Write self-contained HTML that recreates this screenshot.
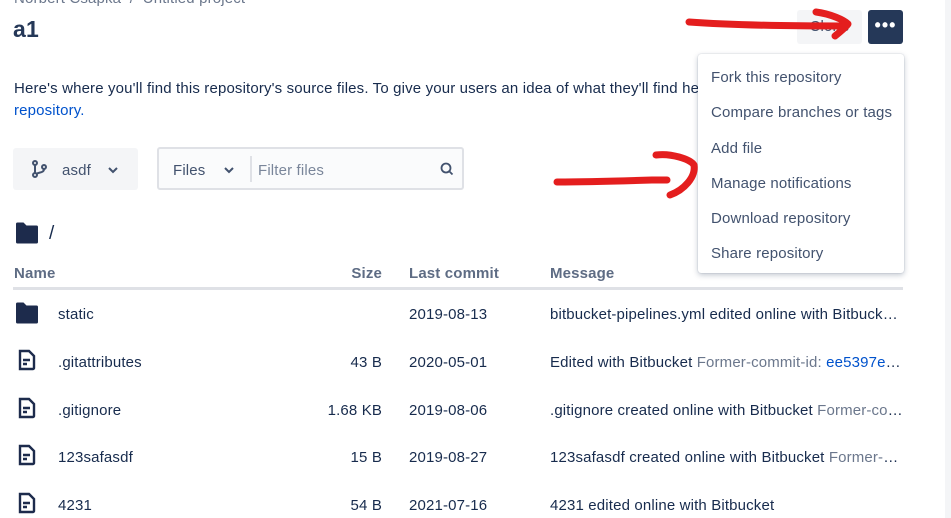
<!DOCTYPE html>
<html><head><meta charset="utf-8"><style>
*{margin:0;padding:0;box-sizing:border-box}
body{width:951px;height:518px;overflow:hidden;background:#fff;font-family:"Liberation Sans",sans-serif;font-size:15px;letter-spacing:0.15px;color:#172b4d;position:relative}
.a{position:absolute;white-space:nowrap}
.g{color:#6b778c}
.hd{font-weight:bold;color:#5e6c84}
.m{width:354px;overflow:hidden;text-overflow:ellipsis}
.s{left:282px;width:100px;text-align:right}
.mi{position:absolute;left:13px;color:#42526e}
</style></head><body>
<div style="position:absolute;right:0;top:0;width:6px;height:518px;background:#f4f5f7"></div>
<div class="a g" style="left:14px;top:-10px">Norbert Csapka &nbsp;/&nbsp; Untitled project</div>
<div class="a" style="left:13px;top:16px;font-size:23px;font-weight:bold;color:#253858">a1</div>
<div class="a" style="left:797px;top:10px;width:65px;height:34px;background:#f4f5f7;border-radius:3px;color:#42526e;text-align:center;line-height:34px">Clone</div>
<div class="a" style="left:868px;top:10px;width:35px;height:34px;background:#253858;border-radius:3px;color:#fff;text-align:center;line-height:30px;font-size:18px;font-weight:bold;letter-spacing:1px">•••</div>
<div class="a" style="left:14px;top:80px">Here's where you'll find this repository's source files. To give your users an idea of what they'll find he</div>
<div class="a" style="left:14px;top:102px;color:#0052cc">repository.</div>
<div class="a" style="left:13px;top:148px;width:125px;height:42px;background:#f4f5f7;border-radius:3px"></div>
<svg class="a" style="left:30px;top:159px" width="20" height="20" viewBox="0 0 20 20" fill="none" stroke="#42526e" stroke-width="2"><circle cx="5" cy="4" r="2"/><circle cx="5" cy="16" r="2"/><circle cx="14" cy="8" r="2"/><path d="M5 6v8M14 10c0 4-5 3-8 5"/></svg>
<div class="a" style="left:62px;top:162px;font-weight:500;color:#42526e">asdf</div>
<svg class="a" style="left:107px;top:165px" width="12" height="10"><path d="M2 3l4 4 4-4" stroke="#42526e" stroke-width="2" fill="none"/></svg>
<div class="a" style="left:157px;top:147px;width:307px;height:43px;background:#fafbfc;border:2px solid #dfe1e6;border-radius:3px"></div>
<div class="a" style="left:173px;top:162px;font-weight:500;color:#42526e">Files</div>
<svg class="a" style="left:223px;top:165px" width="12" height="10"><path d="M2 3l4 4 4-4" stroke="#42526e" stroke-width="2" fill="none"/></svg>
<div class="a" style="left:250px;top:156px;width:2px;height:26px;background:#dfe1e6"></div>
<div class="a" style="left:258px;top:162px;color:#7a869a">Filter files</div>
<svg class="a" style="left:440px;top:162px" width="14" height="14" fill="none" stroke="#42526e" stroke-width="1.8"><circle cx="6" cy="6" r="4.5"/><path d="M9.5 9.5l3 3"/></svg>
<svg class="a" style="left:15px;top:222px" width="24" height="22"><path d="M1 2a1.5 1.5 0 0 1 1.5-1.5h6l3 3h10a1.5 1.5 0 0 1 1.5 1.5v15a1.5 1.5 0 0 1-1.5 1.5h-19A1.5 1.5 0 0 1 1 20z" fill="#1d2b4c"/></svg>
<div class="a" style="left:49px;top:223px;font-size:19px">/</div>
<div class="a hd" style="left:14px;top:265px">Name</div>
<div class="a hd s" style="top:265px">Size</div>
<div class="a hd" style="left:409px;top:265px">Last commit</div>
<div class="a hd" style="left:550px;top:265px">Message</div>
<div class="a" style="left:13px;top:287px;width:890px;height:3px;background:#dfe1e6"></div>
<svg class="a" style="left:15px;top:302px" width="24" height="22"><path d="M1 2a1.5 1.5 0 0 1 1.5-1.5h6l3 3h10a1.5 1.5 0 0 1 1.5 1.5v15a1.5 1.5 0 0 1-1.5 1.5h-19A1.5 1.5 0 0 1 1 20z" fill="#1d2b4c"/></svg>
<div class="a" style="left:58px;top:306px">static</div>
<div class="a" style="left:409px;top:306px">2019-08-13</div>
<div class="a m" style="left:550px;top:306px">bitbucket-pipelines.yml edited online with Bitbucket Former</div>

<svg class="a" style="left:18px;top:349px" width="18" height="22" fill="none" stroke="#1d2b4c" stroke-width="2.4"><path d="M2 2h9l5 5v12a1 1 0 0 1-1 1H2z"/><path d="M5 11h7M5 15h4"/></svg>
<div class="a" style="left:58px;top:354px">.gitattributes</div>
<div class="a s" style="top:354px">43 B</div>
<div class="a" style="left:409px;top:354px">2020-05-01</div>
<div class="a m" style="left:550px;top:354px">Edited with Bitbucket <span class="g">Former-commit-id:</span> <span style="color:#0052cc">ee5397e8b7c6</span></div>

<svg class="a" style="left:18px;top:397px" width="18" height="22" fill="none" stroke="#1d2b4c" stroke-width="2.4"><path d="M2 2h9l5 5v12a1 1 0 0 1-1 1H2z"/><path d="M5 11h7M5 15h4"/></svg>
<div class="a" style="left:58px;top:402px">.gitignore</div>
<div class="a s" style="top:402px">1.68 KB</div>
<div class="a" style="left:409px;top:402px">2019-08-06</div>
<div class="a m" style="left:550px;top:402px">.gitignore created online with Bitbucket <span class="g">Former-commit</span></div>

<svg class="a" style="left:18px;top:444px" width="18" height="22" fill="none" stroke="#1d2b4c" stroke-width="2.4"><path d="M2 2h9l5 5v12a1 1 0 0 1-1 1H2z"/><path d="M5 11h7M5 15h4"/></svg>
<div class="a" style="left:58px;top:449px">123safasdf</div>
<div class="a s" style="top:449px">15 B</div>
<div class="a" style="left:409px;top:449px">2019-08-27</div>
<div class="a m" style="left:550px;top:449px">123safasdf created online with Bitbucket <span class="g">Former-commit</span></div>

<svg class="a" style="left:18px;top:492px" width="18" height="22" fill="none" stroke="#1d2b4c" stroke-width="2.4"><path d="M2 2h9l5 5v12a1 1 0 0 1-1 1H2z"/><path d="M5 11h7M5 15h4"/></svg>
<div class="a" style="left:58px;top:497px">4231</div>
<div class="a s" style="top:497px">54 B</div>
<div class="a" style="left:409px;top:497px">2021-07-16</div>
<div class="a" style="left:550px;top:497px">4231 edited online with Bitbucket</div>

<div class="a" style="left:698px;top:54px;width:206px;height:219px;background:#fff;border-radius:3px;box-shadow:0 2px 6px rgba(9,30,66,.25),0 0 1px rgba(9,30,66,.3)">
<div class="mi" style="top:15px">Fork this repository</div>
<div class="mi" style="top:50px">Compare branches or tags</div>
<div class="mi" style="top:86px">Add file</div>
<div class="mi" style="top:121px">Manage notifications</div>
<div class="mi" style="top:156px">Download repository</div>
<div class="mi" style="top:191px">Share repository</div>
</div>
<svg class="a" style="left:0;top:0" width="951" height="518" fill="none" stroke="#e41e1e" stroke-width="7" stroke-linecap="round" stroke-linejoin="round">
<path d="M689 22c40 3 100 4 155 4"/><path d="M816 12c15 2 28 8 32 12c-3 4-8 8-13 12"/>
<path d="M557 182c35 0 65 -1 95 -2h15"/><path d="M656 155c15 -2 34 4 38 10c2 12 -10 25 -24 30"/>
</svg>
</body></html>
